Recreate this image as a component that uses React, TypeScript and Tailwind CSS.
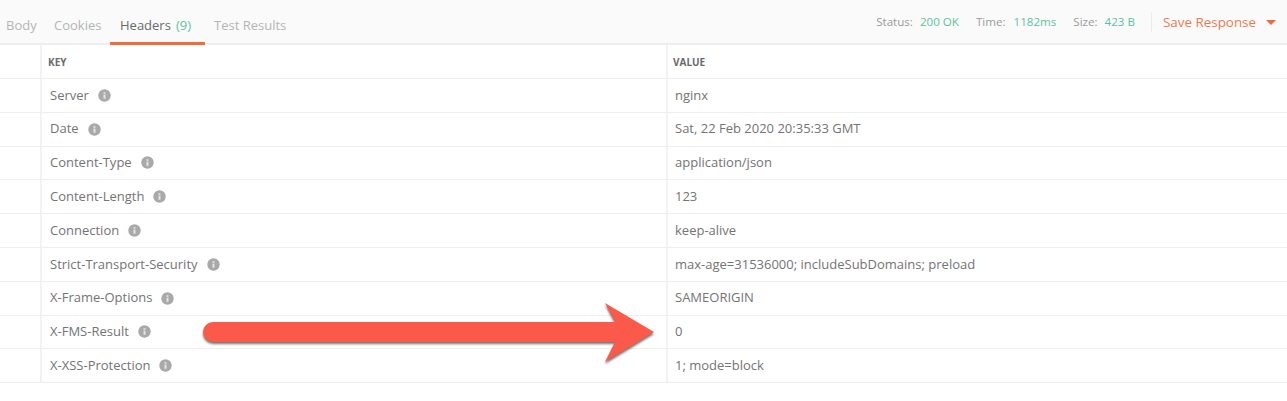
import React from "react";

const rows = [
  { key: "Server", value: "nginx" },
  { key: "Date", value: "Sat, 22 Feb 2020 20:35:33 GMT" },
  { key: "Content-Type", value: "application/json" },
  { key: "Content-Length", value: "123" },
  { key: "Connection", value: "keep-alive" },
  { key: "Strict-Transport-Security", value: "max-age=31536000; includeSubDomains; preload" },
  { key: "X-Frame-Options", value: "SAMEORIGIN" },
  { key: "X-FMS-Result", value: "0" },
  { key: "X-XSS-Protection", value: "1; mode=block" },
];

function InfoIcon() {
  return (
    <svg width="13" height="13" viewBox="0 0 13 13" className="ml-[9px] shrink-0">
      <circle cx="6.5" cy="6.5" r="6.2" fill="#a9a9a9" />
      <rect x="5.5" y="5.6" width="2" height="4.2" fill="#e4e4e4" />
      <rect x="5.5" y="3.2" width="2" height="1.6" fill="#e4e4e4" />
    </svg>
  );
}

export default function App() {
  return (
    <div className="relative w-[1287px] h-[401px] overflow-hidden bg-white font-['Open_Sans',sans-serif] text-[13px] text-[#747474]">
      <div className="flex items-start justify-between h-[45px] bg-[#fafafa] border-b-2 border-[#eeeeee]">
        <div className="flex h-[45px]">
          <div className="pl-[6px] pt-[16px] w-[54px] text-[#b5b5b5]">Body</div>
          <div className="pt-[16px] w-[56px] text-[#b5b5b5]">Cookies</div>
          <div className="flex pl-[10px] pt-[16px] w-[95px] h-[45px] border-b-[3px] border-[#f26b3a] text-[#6a6a6a]">
            <span>Headers</span>
            <span className="ml-[5px] text-[#5cc4a0]">(9)</span>
          </div>
          <div className="ml-[9px] pt-[16px] text-[#b5b5b5]">Test Results</div>
        </div>
        <div className="flex items-center h-[44px] text-[11.6px] text-[#9a9a9a] pr-[11px]">
          <span>Status:</span>
          <span className="ml-[7px] text-[#5cc4a0]">200 OK</span>
          <span className="ml-[17px]">Time:</span>
          <span className="ml-[8px] text-[#5cc4a0]">1182ms</span>
          <span className="ml-[17px]">Size:</span>
          <span className="ml-[7px] text-[#5cc4a0]">423 B</span>
          <div className="ml-[16px] h-[20px] w-px bg-[#ececec]" />
          <span className="ml-[11px] text-[13.4px] text-[#ee7a50]">Save Response</span>
          <div className="ml-[10px] w-0 h-0 border-x-[5px] border-x-transparent border-t-[5px] border-t-[#ee6a3a]" />
        </div>
      </div>

      <div className="flex h-[34px] border-b border-[#eeeeee]">
        <div className="w-[42px] border-r-2 border-[#f2f2f2]" />
        <div className="flex items-center w-[626px] pl-[6px] pt-[2px] border-r-2 border-[#f2f2f2] text-[10px] font-bold text-[#6a6a6a]">KEY</div>
        <div className="flex items-center pl-[5px] pt-[2px] text-[10px] font-bold text-[#6a6a6a]">VALUE</div>
      </div>

      {rows.map((row) => (
        <div key={row.key} className="flex h-[33.8px] border-b border-[#eeeeee]">
          <div className="w-[42px] border-r-2 border-[#f2f2f2]" />
          <div className="flex items-center w-[626px] pl-[8px] border-r-2 border-[#f2f2f2]">
            <span>{row.key}</span>
            <InfoIcon />
          </div>
          <div className="flex items-center pl-[7px]">{row.value}</div>
        </div>
      ))}

      {/* red annotation arrow over the table */}
      <svg
        width="460"
        height="70"
        viewBox="0 0 460 70"
        className="absolute left-[200px] top-[298px] drop-shadow-[0_2px_1px_rgba(0,0,0,0.55)]"
      >
        <path d="M13 24 H415 L405 5 L454 34 L405 64 L415 44 H13 A10 10 0 0 1 13 24 Z" fill="#fb5a4a" />
      </svg>
    </div>
  );
}
